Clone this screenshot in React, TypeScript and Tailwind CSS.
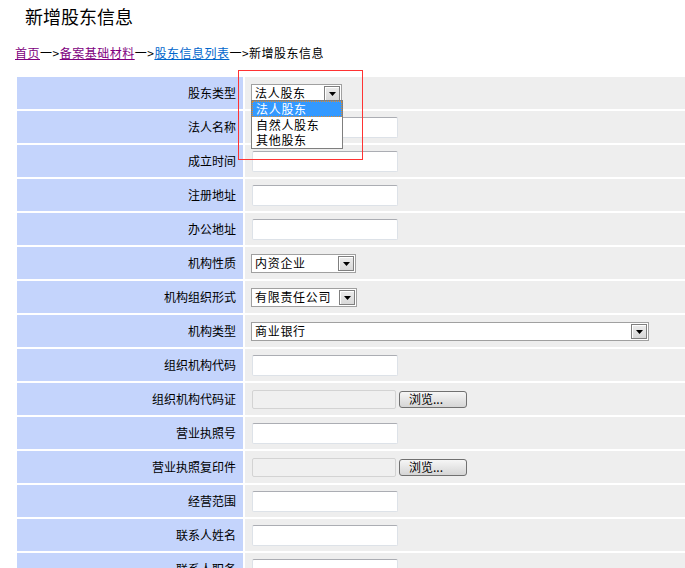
type Field =
  | { label: string; kind: 'input' }
  | { label: string; kind: 'file' }
  | { label: string; kind: 'select'; value: string; width: string; open?: boolean };

const fields: Field[] = [
  { label: '股东类型', kind: 'select', value: '法人股东', width: 'w-[91px]', open: true },
  { label: '法人名称', kind: 'input' },
  { label: '成立时间', kind: 'input' },
  { label: '注册地址', kind: 'input' },
  { label: '办公地址', kind: 'input' },
  { label: '机构性质', kind: 'select', value: '内资企业', width: 'w-[105px]' },
  { label: '机构组织形式', kind: 'select', value: '有限责任公司', width: 'w-[106px]' },
  { label: '机构类型', kind: 'select', value: '商业银行', width: 'w-[398px]' },
  { label: '组织机构代码', kind: 'input' },
  { label: '组织机构代码证', kind: 'file' },
  { label: '营业执照号', kind: 'input' },
  { label: '营业执照复印件', kind: 'file' },
  { label: '经营范围', kind: 'input' },
  { label: '联系人姓名', kind: 'input' },
  { label: '联系人职务', kind: 'input' },
  { label: '联系电话', kind: 'input' },
];

function Arrow() {
  return (
    <div className="m-[1px] ml-auto flex w-[16px] self-stretch items-center justify-center border border-[#7f7f7f] bg-gradient-to-b from-[#ececec] to-[#d8d8d8] shadow-[inset_1px_1px_0_#ffffff]">
      <svg width="7" height="4" viewBox="0 0 7 4" className="mt-[2px]">
        <polygon points="0,0 7,0 3.5,4" fill="#000" />
      </svg>
    </div>
  );
}

function Select({ value, width, open }: { value: string; width: string; open?: boolean }) {
  return (
    <div className={`relative flex h-[19px] ${width} items-center border border-[#a0a0a0] bg-white`}>
      <span className="pl-[3px] tracking-[0.7px] leading-none">{value}</span>
      <Arrow />
      {open && (
        <div className="absolute left-[-1px] top-[15px] z-10 w-[92px] border border-[#7f7f7f] bg-white tracking-[0.7px]">
          <div className="h-[16px] border border-dotted border-[#e08a2c] bg-[#3399ff] pl-[3px] leading-[13px] text-white">
            法人股东
          </div>
          <div className="h-[16px] pl-[4px] leading-[15px]">自然人股东</div>
          <div className="h-[15px] pl-[4px] leading-[14px]">其他股东</div>
        </div>
      )}
    </div>
  );
}

function TextInput() {
  return (
    <div className="h-[21px] w-[146px] rounded-[2px] border border-[#dde2e8] border-t-[#abadb3] bg-white" />
  );
}

function FileInput() {
  return (
    <div className="flex items-center">
      <div className="h-[19px] w-[144px] rounded-[2px] border border-[#d3d3d3] bg-[#f0f0f0]" />
      <div className="ml-[3px] flex h-[17px] w-[68px] items-center rounded-[3px] border border-[#707070] bg-gradient-to-b from-[#f6f6f6] to-[#d5d5d5] pl-[9px] leading-none">
        浏览...
      </div>
    </div>
  );
}

export default function App() {
  return (
    <div className="relative min-h-[568px] bg-white text-[12px] text-black font-['SimSun','Noto_Sans_CJK_SC',sans-serif]">
      <div className="h-[30px] pl-[25px] text-[18px] leading-[32px]">新增股东信息</div>
      <div className="mt-[15px] pl-[15px] leading-[16px] tracking-[0.5px]">
        <a className="text-[#800080] underline">首页</a>
        一&gt;
        <a className="text-[#800080] underline">备案基础材料</a>
        一&gt;
        <a className="text-[#0066cc] underline">股东信息列表</a>
        一&gt;新增股东信息
      </div>

      <div className="mt-[16px] flex flex-col gap-[2px] pl-[17px]">
        {fields.map((f) => (
          <div key={f.label} className="flex h-[32px] gap-[2px]">
            <div className="flex w-[226px] items-center justify-end bg-[#c4d4fc] pr-[7px]">{f.label}</div>
            <div className="flex flex-1 items-center bg-[#eeeeee] pl-[6px]">
              {f.kind === 'input' && <div className="pl-[1px]"><TextInput /></div>}
              {f.kind === 'file' && <div className="pl-[1px]"><FileInput /></div>}
              {f.kind === 'select' && <Select value={f.value} width={f.width} open={f.open} />}
            </div>
          </div>
        ))}
      </div>

      <div className="pointer-events-none absolute left-[238px] top-[70px] z-20 h-[90px] w-[125px] border border-[#ff3333]" />
    </div>
  );
}
